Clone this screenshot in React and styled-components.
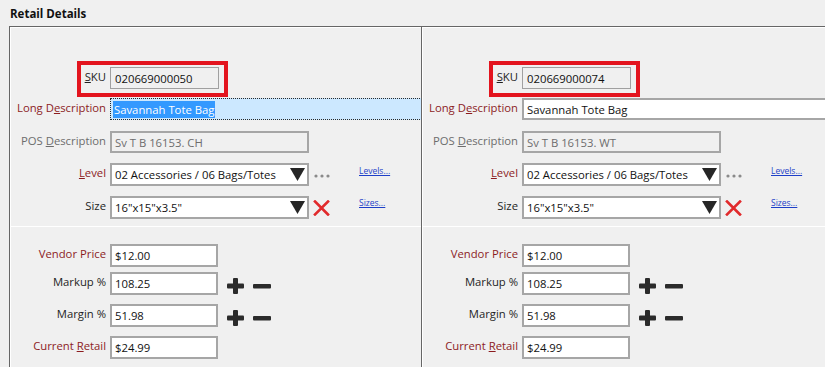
import React from "react";
import styled, { createGlobalStyle } from "styled-components";

const GlobalStyle = createGlobalStyle`
  html, body { margin: 0; padding: 0; background: #f0f0f0; }
  body {
    font-family: "Open Sans", "Noto Sans", sans-serif;
    font-size: 11.3px;
    color: #1e1e1e;
    overflow: hidden;
  }
`;

const Page = styled.div`
  width: 825px;
  height: 367px;
  overflow: hidden;
  background: #f0f0f0;
`;

const Title = styled.div`
  height: 19px;
  padding: 7px 0 0 10px;
  font-weight: 700;
  font-size: 11.5px;
  line-height: 14px;
  color: #111;
`;

const Panels = styled.div`
  display: flex;
  margin-left: 9px;
  height: 341px;
`;

const Panel = styled.section`
  flex: 0 0 412px;
  width: 412px;
  box-sizing: border-box;
  border-top: 1px solid #666;
  border-left: 1px solid #666;
  box-shadow: inset 1px 1px 0 #fff;
  overflow: hidden;
  display: flex;
  flex-direction: column;
`;

const TopSection = styled.div`
  height: 199px;
  box-sizing: border-box;
  padding-top: 34px;
  display: flex;
  flex-direction: column;
`;

const Divider = styled.div`
  height: 1px;
  background: #fff;
  flex-shrink: 0;
`;

const BottomSection = styled.div`
  display: flex;
  flex-direction: column;
`;

const Row = styled.div`
  display: flex;
  align-items: flex-start;
  margin-top: ${(p) => p.$mt || 0}px;
  margin-left: ${(p) => p.$ml || 0}px;
`;

const toneColor = { red: "#8c1c1f", gray: "#6d6d6d", dark: "#1e1e1e" };

const Label = styled.label`
  flex: 0 0 ${(p) => p.$w || 96}px;
  width: ${(p) => p.$w || 96}px;
  margin-right: 4px;
  text-align: right;
  white-space: nowrap;
  line-height: 20px;
  color: ${(p) => toneColor[p.$tone || "dark"]};
`;

const Highlight = styled.div`
  display: flex;
  align-items: flex-start;
  border: 4px solid #e3141e;
  padding: 2px 5px 4px 0;
`;

const Field = styled.div`
  box-sizing: border-box;
  flex: 0 0 ${(p) => p.$w}px;
  width: ${(p) => p.$w}px;
  height: ${(p) => p.$h || 23}px;
  display: flex;
  align-items: center;
  padding-left: 3px;
  white-space: nowrap;
  background: ${(p) => (p.$disabled ? "#f0f0f0" : "#fff")};
  border: 2px solid #a6a6a6;
  color: ${(p) => (p.$muted ? "#6d6d6d" : "#111")};
  ${(p) =>
    p.$thin &&
    `border: 1px solid #a0a0a0; padding-left: 4px;`}
  ${(p) =>
    p.$focused &&
    `background: #cce8ff; border: 1px dotted #2a2a2a; padding-left: 2px;`}
`;

const Selection = styled.span`
  background: #3399ff;
  color: #fff;
  line-height: 17px;
  padding: 0 1px;
`;

const Combo = styled(Field)`
  justify-content: space-between;
  padding-right: 2px;
`;

const Side = styled.div`
  flex: 0 0 17px;
  width: 17px;
  height: 23px;
  margin-left: 4px;
  display: flex;
  align-items: center;
  justify-content: center;
`;

const Link = styled.a`
  margin-left: 29px;
  margin-top: ${(p) => p.$mt || 2}px;
  font-size: 8.5px;
  line-height: 12px;
  color: #1d3fc8;
  text-decoration: underline;
  cursor: pointer;
`;

const Steppers = styled.div`
  display: flex;
  align-items: center;
  gap: 9px;
  margin-left: 9px;
  margin-top: 6px;
`;

const Triangle = () => (
  <svg width="15" height="13" viewBox="0 0 15 13">
    <polygon points="0,0 15,0 7.5,13" fill="#262626" />
  </svg>
);

const Dots = () => (
  <svg width="16" height="4" viewBox="0 0 16 4" style={{ marginTop: 2 }}>
    <circle cx="2" cy="2" r="1.6" fill="#8a8a8a" />
    <circle cx="8" cy="2" r="1.6" fill="#8a8a8a" />
    <circle cx="14" cy="2" r="1.6" fill="#8a8a8a" />
  </svg>
);

const RedX = () => (
  <svg width="17" height="16" viewBox="0 0 17 16">
    <path d="M2 1.5 L15 14.5 M15 1.5 L2 14.5" stroke="#e12a2c" strokeWidth="2.6" strokeLinecap="square" />
  </svg>
);

const Plus = () => (
  <svg width="17" height="16" viewBox="0 0 17 16">
    <rect x="6" y="0" width="5" height="16" rx="1" fill="#2b2b2b" />
    <rect x="0" y="5.5" width="17" height="5" rx="1" fill="#2b2b2b" />
  </svg>
);

const Minus = () => (
  <svg width="18" height="16" viewBox="0 0 18 16">
    <rect x="0" y="6" width="18" height="4.5" rx="1" fill="#2b2b2b" />
  </svg>
);

const U = styled.span`
  text-decoration: underline;
`;

function RetailPanel({ sku, pos, focused }) {
  return (
    <Panel>
      <TopSection>
        <Row $ml={67}>
          <Highlight>
            <Label $w={25}>
              <U>S</U>KU
            </Label>
            <Field $w={109} $h={22} $disabled $thin>
              {sku}
            </Field>
          </Highlight>
        </Row>
        <Row $mt={1}>
          <Label $tone="red">
            Long D<U>e</U>scription
          </Label>
          <Field $w={320} $h={22} $focused={focused}>
            {focused ? <Selection>Savannah Tote Bag</Selection> : "Savannah Tote Bag"}
          </Field>
        </Row>
        <Row $mt={11}>
          <Label $tone="gray">
            POS <U>D</U>escription
          </Label>
          <Field $w={199} $h={22} $disabled $muted>
            {pos}
          </Field>
        </Row>
        <Row $mt={10}>
          <Label $tone="red">
            <U>L</U>evel
          </Label>
          <Combo $w={199}>
            <span>02 Accessories / 06 Bags/Totes</span>
            <Triangle />
          </Combo>
          <Side>
            <Dots />
          </Side>
          <Link $mt={2}>Levels...</Link>
        </Row>
        <Row $mt={10}>
          <Label>Size</Label>
          <Combo $w={199}>
            <span>16"x15"x3.5"</span>
            <Triangle />
          </Combo>
          <Side>
            <RedX />
          </Side>
          <Link $mt={1}>Sizes...</Link>
        </Row>
      </TopSection>
      <Divider />
      <BottomSection>
        <Row $mt={17}>
          <Label $tone="red">Vendor Price</Label>
          <Field $w={108}>$12.00</Field>
        </Row>
        <Row $mt={5}>
          <Label>Markup %</Label>
          <Field $w={108}>108.25</Field>
          <Steppers>
            <Plus />
            <Minus />
          </Steppers>
        </Row>
        <Row $mt={9}>
          <Label>Margin %</Label>
          <Field $w={108}>51.98</Field>
          <Steppers>
            <Plus />
            <Minus />
          </Steppers>
        </Row>
        <Row $mt={9}>
          <Label $tone="red">
            Current <U>R</U>etail
          </Label>
          <Field $w={108}>$24.99</Field>
        </Row>
      </BottomSection>
    </Panel>
  );
}

export default function App() {
  return (
    <Page>
      <GlobalStyle />
      <Title>Retail Details</Title>
      <Panels>
        <RetailPanel sku="020669000050" pos="Sv T B 16153. CH" focused />
        <RetailPanel sku="020669000074" pos="Sv T B 16153. WT" />
      </Panels>
    </Page>
  );
}
